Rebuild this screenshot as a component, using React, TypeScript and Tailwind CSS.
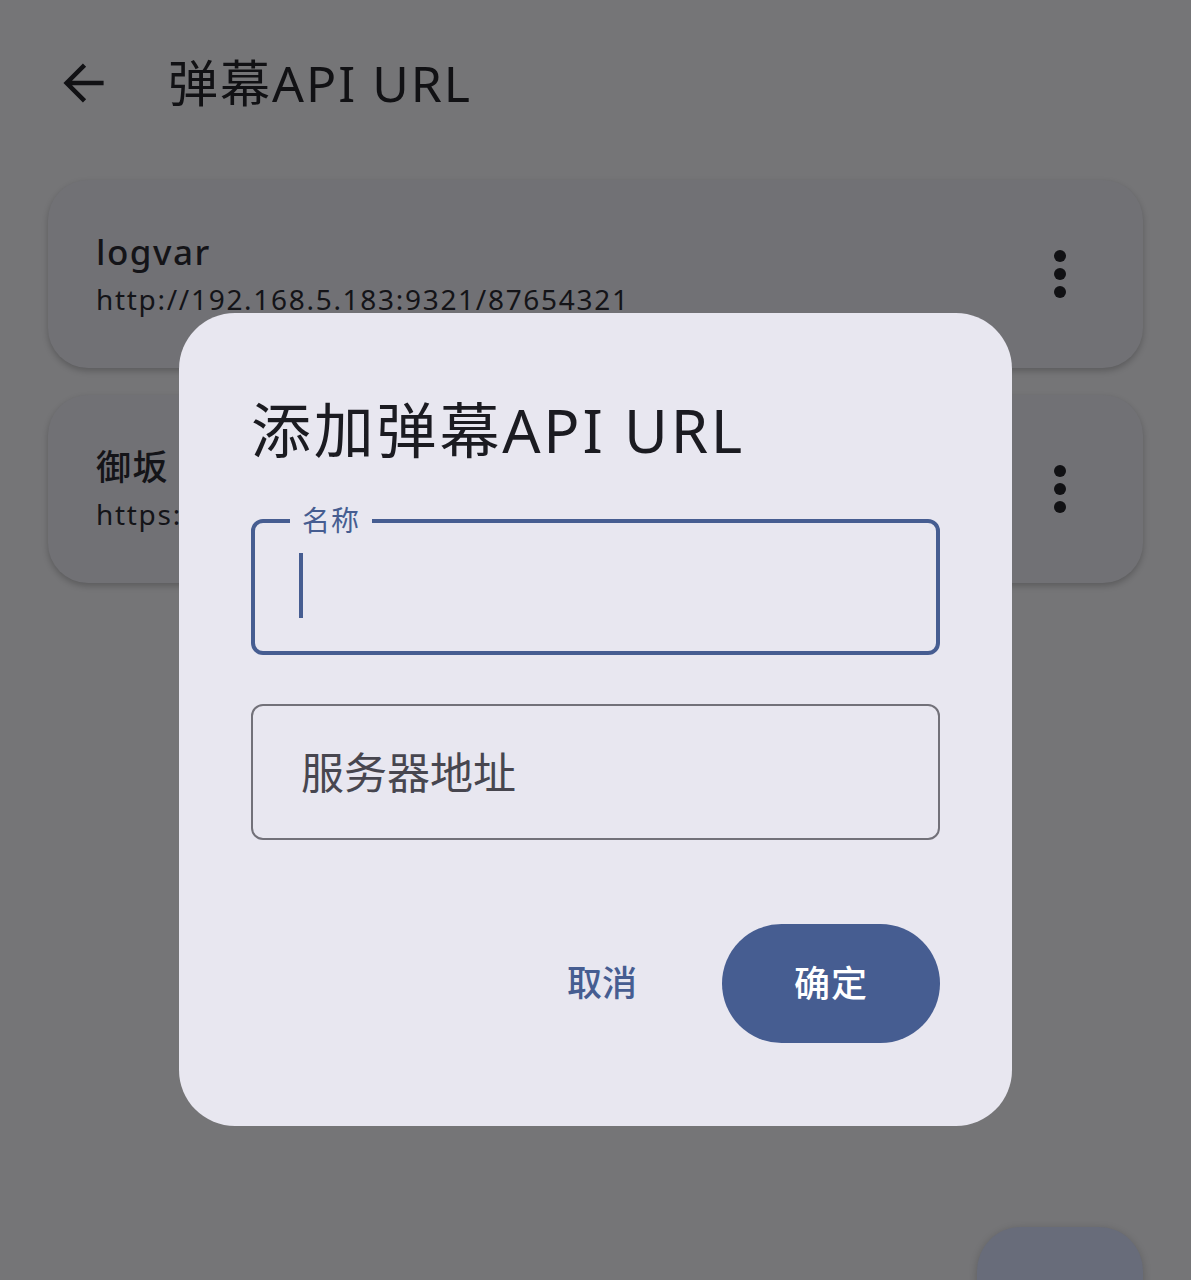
import React from 'react';

const font = { fontFamily: '"Noto Sans", "Noto Sans CJK SC", sans-serif' };

function MoreVert() {
  return (
    <svg width="48" height="48" viewBox="0 0 48 48" className="text-[#111114]">
      <circle cx="24" cy="6" r="6" fill="currentColor" />
      <circle cx="24" cy="24" r="6" fill="currentColor" />
      <circle cx="24" cy="42" r="6" fill="currentColor" />
    </svg>
  );
}

function ServerCard({ name, url }: { name: string; url: string }) {
  return (
    <div className="flex h-[188px] items-center justify-between rounded-[40px] bg-[#717175] pl-[48px] pr-[59px] shadow-[0_3px_6px_rgba(0,0,0,0.22)]">
      <div className="flex flex-col">
        <p className="text-[35px] font-medium leading-[50px] tracking-[1.5px] text-[#141418]">{name}</p>
        <p className="whitespace-nowrap text-[28px] leading-[44px] tracking-[1.7px] text-[#141418]">{url}</p>
      </div>
      <MoreVert />
    </div>
  );
}

export default function App() {
  return (
    <div className="relative h-[1280px] w-[1191px] overflow-hidden bg-[#757577]" style={font}>
      <header className="flex h-[166px] items-center pl-[58px]">
        <svg width="52" height="52" viewBox="0 0 24 24" fill="none" stroke="#111114" strokeWidth="2.1" strokeLinecap="square">
          <path d="M20 12H4.5M11.5 4.5 4 12l7.5 7.5" />
        </svg>
        <h1 className="ml-[58px] text-[50px] leading-none tracking-[2px] text-[#111114]">弹幕API URL</h1>
      </header>

      <div className="mt-[14px] flex flex-col gap-[27px] px-[48px]">
        <ServerCard name="logvar" url="http://192.168.5.183:9321/87654321" />
        <ServerCard name="御坂" url="https://api.dandanplay.net" />
      </div>

      <div className="absolute right-[48px] top-[1227px] h-[120px] w-[166px] rounded-[44px] bg-[#686c7a] shadow-[0_2px_8px_rgba(0,0,0,0.2)]" />

      <div className="absolute left-[179px] top-[313px] w-[833px] rounded-[56px] bg-[#e8e7f0] px-[72px] pb-[83px] pt-[87px]">
        <h2 className="text-[60px] leading-none tracking-[2.8px] text-[#1b1b21]">添加弹幕API URL</h2>

        <div className="relative mt-[59px] h-[136px] rounded-[12px] border-[4px] border-[#465d91]">
          <span className="absolute left-[35px] top-[-23px] bg-[#e8e7f0] px-[12px] text-[28px] leading-[40px] tracking-[1px] text-[#465d91]">
            名称
          </span>
          <div className="ml-[44px] mt-[30px] h-[65px] w-[4px] bg-[#465d91]" />
        </div>

        <div className="mt-[49px] flex h-[136px] items-center rounded-[12px] border-2 border-[#727179] pl-[48px]">
          <span className="text-[43px] leading-none text-[#47464f]">服务器地址</span>
        </div>

        <div className="mt-[84px] flex items-center justify-end">
          <button className="mr-[85px] text-[35px] font-medium text-[#465d91]">取消</button>
          <button className="h-[119px] w-[218px] rounded-full bg-[#465d91] text-[36px] font-medium tracking-[1px] text-white">确定</button>
        </div>
      </div>
    </div>
  );
}
